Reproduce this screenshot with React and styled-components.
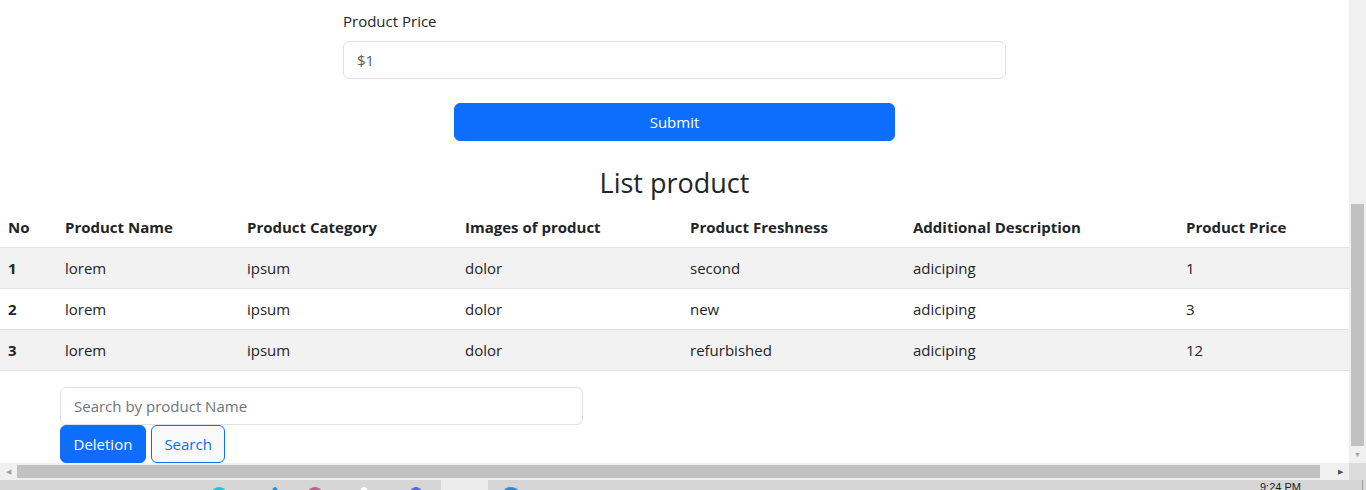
import React, { useState } from "react";
import styled, { createGlobalStyle } from "styled-components";

const products = [
  { no: 1, name: "lorem", category: "ipsum", image: "dolor", freshness: "second", description: "adiciping", price: 1 },
  { no: 2, name: "lorem", category: "ipsum", image: "dolor", freshness: "new", description: "adiciping", price: 3 },
  { no: 3, name: "lorem", category: "ipsum", image: "dolor", freshness: "refurbished", description: "adiciping", price: 12 },
];

const columns = [
  { label: "No", width: 57 },
  { label: "Product Name", width: 182 },
  { label: "Product Category", width: 218 },
  { label: "Images of product", width: 225 },
  { label: "Product Freshness", width: 223 },
  { label: "Additional Description", width: 273 },
  { label: "Product Price", width: 171 },
];

const trayIcons = [
  { x: 212, color: "#22c0d8", w: 14 },
  { x: 272, color: "#1f8fe0", w: 6 },
  { x: 308, color: "#c0608a", w: 14 },
  { x: 360, color: "#ffffff", w: 8 },
  { x: 410, color: "#5865e8", w: 12 },
  { x: 458, color: "#e03a36", w: 14 },
  { x: 503, color: "#2a8ad8", w: 16 },
];

const App = () => {
  const [price, setPrice] = useState("$1");
  const [search, setSearch] = useState("");

  const onSubmit = (event) => {
    event.preventDefault();
  };

  return (
    <>
      <GlobalStyle />
      <Screen>
        <Viewport>
          <Form onSubmit={onSubmit}>
            <Label htmlFor="price">Product Price</Label>
            <Input id="price" type="text" value={price} onChange={(e) => setPrice(e.target.value)} />
            <SubmitButton type="submit">Submit</SubmitButton>
          </Form>
          <Title>List product</Title>
          <Table>
            <colgroup>
              {columns.map((c) => (
                <col key={c.label} style={{ width: c.width }} />
              ))}
            </colgroup>
            <thead>
              <tr>
                {columns.map((c) => (
                  <Th key={c.label}>{c.label}</Th>
                ))}
              </tr>
            </thead>
            <tbody>
              {products.map((p, i) => (
                <Row key={p.no} $striped={i % 2 === 0}>
                  <Th scope="row">{p.no}</Th>
                  <Td>{p.name}</Td>
                  <Td>{p.category}</Td>
                  <Td>{p.image}</Td>
                  <Td>{p.freshness}</Td>
                  <Td>{p.description}</Td>
                  <Td>{p.price}</Td>
                </Row>
              ))}
            </tbody>
          </Table>
          <SearchBox>
            <SearchInput
              type="text"
              placeholder="Search by product Name"
              value={search}
              onChange={(e) => setSearch(e.target.value)}
            />
            <ButtonRow>
              <Button>Deletion</Button>
              <Button $outline>Search</Button>
            </ButtonRow>
          </SearchBox>
        </Viewport>

        <VScroll>
          <VThumb />
          <Arrow>▼</Arrow>
        </VScroll>

        <HScroll>
          <Arrow>◀</Arrow>
          <HThumb />
          <Arrow $dark>▶</Arrow>
        </HScroll>
        <Corner />

        <Taskbar>
          {trayIcons.map((t) => (
            <TrayIcon key={t.x} style={{ left: t.x, width: t.w, background: t.color }} />
          ))}
          <ActiveApp />
          <Clock>9:24 PM</Clock>
          <TaskEdge />
        </Taskbar>
      </Screen>
    </>
  );
};

export default App;

const GlobalStyle = createGlobalStyle`
body {
  margin: 0;
  overflow: hidden;
  font-family: 'Open Sans', 'Liberation Sans', sans-serif;
  color: #212529;
}
* {
  box-sizing: border-box;
}
`;

const Screen = styled.div`
display: grid;
grid-template-columns: 1349px 17px;
grid-template-rows: 463px 17px 10px;
width: 1366px;
height: 490px;
background: white;
`;

const Viewport = styled.div`
overflow: hidden;
display: flex;
flex-direction: column;
padding-top: 9px;
`;

const Form = styled.form`
display: flex;
flex-direction: column;
width: 663px;
margin: 0 0 0 343px;
`;

const Label = styled.label`
font-size: 15px;
line-height: 24px;
margin-bottom: 8px;
`;

const Input = styled.input`
height: 38px;
padding: 6px 13px;
font-family: inherit;
font-size: 15px;
color: #595c5f;
border: 1px solid #dee2e6;
border-radius: 6px;
outline: none;
`;

const SubmitButton = styled.button`
align-self: center;
width: 441px;
height: 38px;
margin-top: 24px;
font-family: inherit;
font-size: 15px;
color: white;
background: #0d6efd;
border: 1px solid #0d6efd;
border-radius: 6px;
`;

const Title = styled.h3`
margin: 25px 0 8px;
font-size: 27px;
font-weight: 500;
line-height: 33px;
text-align: center;
`;

const Table = styled.table`
width: 1349px;
table-layout: fixed;
border-collapse: collapse;
font-size: 15px;
`;

const Row = styled.tr`
background: ${(props) => (props.$striped ? "#f2f2f2" : "white")};
`;

const Th = styled.th`
padding: 8px;
line-height: 24px;
text-align: left;
font-weight: 700;
border-bottom: 1px solid #dee2e6;
white-space: nowrap;
`;

const Td = styled.td`
padding: 8px;
line-height: 24px;
border-bottom: 1px solid #dee2e6;
white-space: nowrap;
`;

const SearchBox = styled.div`
display: flex;
flex-direction: column;
align-items: flex-start;
width: 523px;
margin: 16px 0 0 60px;
`;

const SearchInput = styled(Input)`
width: 100%;
&::placeholder {
  color: #6c757d;
}
`;

const ButtonRow = styled.div`
display: flex;
gap: 5px;
`;

const Button = styled.button`
height: 38px;
padding: 0 12.5px;
font-family: inherit;
font-size: 15px;
color: ${(props) => (props.$outline ? "#0d6efd" : "white")};
background: ${(props) => (props.$outline ? "#f8f9fa" : "#0d6efd")};
border: 1px solid #0d6efd;
border-radius: 6px;
`;

const VScroll = styled.div`
display: flex;
flex-direction: column;
justify-content: flex-end;
align-items: center;
background: #f0f0f0;
padding-bottom: 2px;
`;

const VThumb = styled.div`
width: 13px;
height: 242px;
background: #c1c1c1;
margin-bottom: 3px;
`;

const Arrow = styled.span`
font-size: 7px;
line-height: 12px;
width: 17px;
text-align: center;
color: ${(props) => (props.$dark ? "#505050" : "#a3a3a3")};
`;

const HScroll = styled.div`
display: flex;
align-items: center;
background: #f0f0f0;
`;

const HThumb = styled.div`
height: 13px;
flex: 1;
margin-right: 12px;
background: #c1c1c1;
`;

const Corner = styled.div`
background: #dcdcdc;
`;

const Taskbar = styled.div`
grid-column: 1 / 3;
position: relative;
overflow: hidden;
background: #d6d6d6;
`;

const TrayIcon = styled.span`
position: absolute;
top: 7px;
height: 12px;
border-radius: 50%;
`;

const ActiveApp = styled.span`
position: absolute;
left: 441px;
top: 0;
width: 47px;
height: 10px;
background: #ececec;
`;

const Clock = styled.span`
position: absolute;
left: 1260px;
top: 1px;
font-family: 'Liberation Sans', sans-serif;
font-size: 11px;
line-height: 13px;
color: #1a1a1a;
`;

const TaskEdge = styled.span`
position: absolute;
left: 1362px;
top: 0;
width: 1px;
height: 10px;
background: #a0a0a0;
`;
